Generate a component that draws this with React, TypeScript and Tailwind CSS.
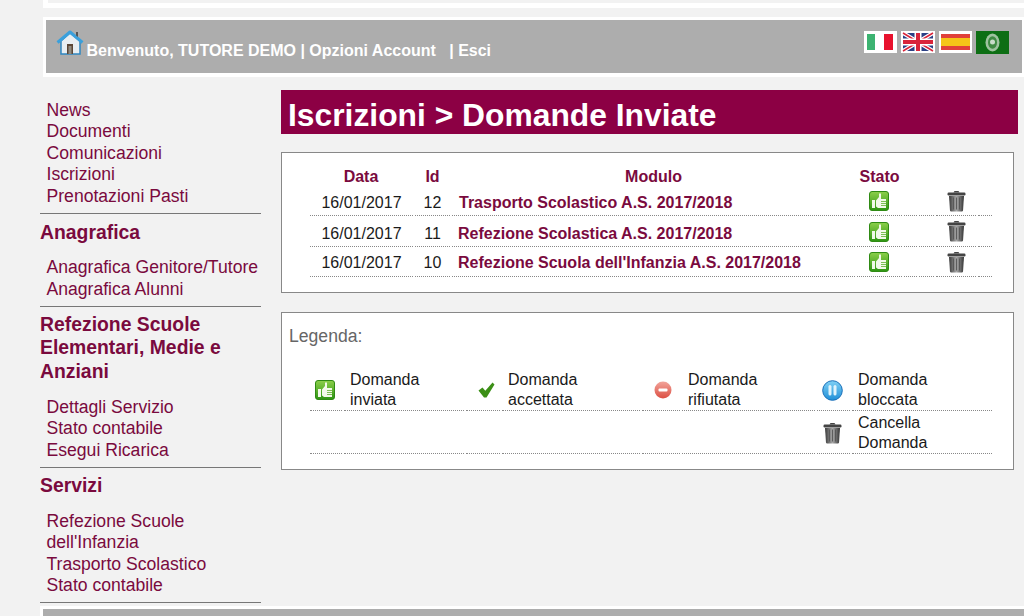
function HomeIcon() {
  return (
    <svg width="28" height="28" viewBox="0 0 28 28" className="shrink-0">
      <path d="M5 12v13h19V12L14 4z" fill="#e8eef2" stroke="#2f86c0" strokeWidth="1.5" />
      <rect x="11" y="15" width="6" height="10" fill="#5b4636" />
      <rect x="12.5" y="17" width="3" height="8" fill="#8f8a80" />
      <path d="M1.5 13.5 14 3l12.500 10.500" fill="none" stroke="#3aa0dc" strokeWidth="3" strokeLinejoin="round" />
      <path d="M20 3h2v5l-2-1.600z" fill="#555" />
    </svg>
  );
}

function ThumbIcon() {
  return (
    <svg width="20" height="20" viewBox="0 0 20 20">
      <defs>
        <linearGradient id="thumbBg" x1="0" y1="0" x2="0" y2="1">
          <stop offset="0" stopColor="#8ccf4a" />
          <stop offset="1" stopColor="#2d9412" />
        </linearGradient>
      </defs>
      <rect x="0.500" y="0.500" width="19" height="19" rx="2.500" fill="url(#thumbBg)" stroke="#2f8a14" />
      <rect x="3" y="9" width="3" height="8" fill="#f2f9ea" />
      <path d="M7 9.500 10 6V2.500h2V8h5v9H9l-2-1.500z" fill="#f2f9ea" />
      <path d="M12 10.500h5M12 12.500h5M12 14.500h5" stroke="#5fb02e" strokeWidth="0.800" />
    </svg>
  );
}

function TrashIcon() {
  return (
    <svg width="19" height="22" viewBox="0 0 19 22">
      <defs>
        <linearGradient id="trashBody" x1="0" y1="0" x2="1" y2="0">
          <stop offset="0" stopColor="#3a3a3a" />
          <stop offset="0.500" stopColor="#a8a8a8" />
          <stop offset="1" stopColor="#333" />
        </linearGradient>
      </defs>
      <path d="M6.500 2.500 7.500 1h4l1 1.500z" fill="#444" />
      <rect x="0.500" y="2.500" width="18" height="3" rx="1.200" fill="#444" />
      <path d="M2 6h15l-1 14.500q-.1 1-1.200 1H4.200q-1.100 0-1.200-1z" fill="url(#trashBody)" />
      <path d="M6.500 7.500v12M9.500 7.500v12M12.500 7.500v12" stroke="#555" strokeWidth="0.900" />
    </svg>
  );
}

function CheckIcon() {
  return (
    <svg width="17" height="16" viewBox="0 0 17 16">
      <path d="M0.500 8.500 4.500 5.500l2.800 3.200L14.500 0.500 16.500 2.500 8.500 15.500h-2.500z" fill="#3b8f16" />
    </svg>
  );
}

function RejectIcon() {
  return (
    <svg width="18" height="18" viewBox="0 0 18 18">
      <defs>
        <linearGradient id="rejectBg" x1="0" y1="0" x2="0" y2="1">
          <stop offset="0" stopColor="#f2a49a" />
          <stop offset="1" stopColor="#dc4f43" />
        </linearGradient>
      </defs>
      <circle cx="9" cy="9" r="8.500" fill="url(#rejectBg)" />
      <rect x="4.500" y="7.500" width="9" height="3" rx="1" fill="#fff" />
    </svg>
  );
}

function BlockedIcon() {
  return (
    <svg width="21" height="21" viewBox="0 0 21 21">
      <defs>
        <linearGradient id="blockBg" x1="0" y1="0" x2="0" y2="1">
          <stop offset="0" stopColor="#7fd0f5" />
          <stop offset="1" stopColor="#1f8fd8" />
        </linearGradient>
      </defs>
      <circle cx="10.500" cy="10.500" r="9.800" fill="url(#blockBg)" stroke="#1b6fb8" />
      <rect x="6.500" y="5" width="3" height="10.500" rx="1.500" fill="#dff3fc" />
      <rect x="11.500" y="5" width="3" height="10.500" rx="1.500" fill="#dff3fc" />
    </svg>
  );
}

function Flags() {
  return (
    <div className="flex items-start gap-[4px] mt-[11px] mr-[13px]">
      <svg width="33" height="22" viewBox="0 0 33 22">
        <rect width="33" height="22" fill="#fff" />
        <rect x="3" y="3" width="8" height="16" fill="#3cb371" />
        <rect x="20" y="3" width="9" height="16" fill="#e8112d" />
      </svg>
      <svg width="34" height="22" viewBox="0 0 34 22">
        <rect width="34" height="22" fill="#fff" />
        <rect x="2" y="2" width="30" height="18" fill="#2a3f85" />
        <path d="M2 2 32 20M32 2 2 20" stroke="#fff" strokeWidth="4" />
        <path d="M2 2 32 20M32 2 2 20" stroke="#d9243a" strokeWidth="1.500" />
        <path d="M17 2v18M2 11h30" stroke="#fff" strokeWidth="7" />
        <path d="M17 2v18M2 11h30" stroke="#d9243a" strokeWidth="4" />
      </svg>
      <svg width="33" height="22" viewBox="0 0 33 22">
        <rect width="33" height="22" fill="#fff" />
        <rect x="2" y="3" width="29" height="16" fill="#e0413a" />
        <rect x="2" y="7" width="29" height="8" fill="#f5c518" />
      </svg>
      <svg width="33" height="23" viewBox="0 0 33 23">
        <rect width="33" height="23" fill="#0d6e14" />
        <ellipse cx="16.500" cy="11.500" rx="7" ry="9" fill="#9fc39f" />
        <ellipse cx="16.500" cy="11.500" rx="4.500" ry="6.200" fill="#3f8a42" />
        <circle cx="16.500" cy="11" r="2.500" fill="#c9dcc9" />
      </svg>
    </div>
  );
}

function NavLinks({ items }: { items: string[] }) {
  return (
    <ul className="pl-[6.500px] text-[17.600px] leading-[21.500px] text-[#7a0a3e]">
      {items.map((item) => (
        <li key={item}>{item}</li>
      ))}
    </ul>
  );
}

function Sidebar() {
  return (
    <aside className="w-[221px] ml-[40px] shrink-0 pt-[22.500px]">
      <NavLinks items={['News', 'Documenti', 'Comunicazioni', 'Iscrizioni', 'Prenotazioni Pasti']} />
      <div className="border-b border-[#777] mt-[5.500px]" />
      <h3 className="text-[19.360px] font-bold leading-[24px] text-[#7a0a3e] mt-[6px] mb-[13.500px]">Anagrafica</h3>
      <NavLinks items={['Anagrafica Genitore/Tutore', 'Anagrafica Alunni']} />
      <div className="border-b border-[#777] mt-[5.500px]" />
      <h3 className="text-[19.360px] font-bold leading-[23.500px] text-[#7a0a3e] mt-[6px] mb-[13.500px]">
        Refezione Scuole Elementari, Medie e Anziani
      </h3>
      <NavLinks items={['Dettagli Servizio', 'Stato contabile', 'Esegui Ricarica']} />
      <div className="border-b border-[#777] mt-[5.500px]" />
      <h3 className="text-[19.360px] font-bold leading-[24px] text-[#7a0a3e] mt-[5.500px] mb-[13.500px]">Servizi</h3>
      <ul className="pl-[6.500px] w-[170px] text-[17.600px] leading-[21.500px] text-[#7a0a3e]">
        <li>Refezione Scuole dell'Infanzia</li>
        <li>Trasporto Scolastico</li>
        <li>Stato contabile</li>
      </ul>
      <div className="border-b border-[#777] mt-[5px]" />
    </aside>
  );
}

const rows = [
  { data: '16/01/2017', id: '12', modulo: 'Trasporto Scolastico A.S. 2017/2018', h: 'h-[28px]', pl: 'pl-[7px]', pt: 'pt-[2px]' },
  { data: '16/01/2017', id: '11', modulo: 'Refezione Scolastica A.S. 2017/2018', h: 'h-[29px]', pl: 'pl-[6px]', pt: 'pt-[4px]' },
  { data: '16/01/2017', id: '10', modulo: "Refezione Scuola dell'Infanzia A.S. 2017/2018", h: 'h-[28px]', pl: 'pl-[6px]', pt: 'pt-0' },
];

const dotted = 'border-b border-dotted border-[#888]';

function DomandeTable() {
  return (
    <table className="table-fixed border-separate border-spacing-[2px] w-[686px] ml-[26px] mt-[13px] text-[16px] leading-[20px] text-[#1a1a1a]">
      <colgroup>
        <col className="w-[103px]" />
        <col className="w-[35px]" />
        <col className="w-[403px]" />
        <col className="w-[45px]" />
        <col className="w-[13px]" />
        <col className="w-[15px]" />
        <col className="w-[40px]" />
        <col className="w-[14px]" />
      </colgroup>
      <thead>
        <tr className="h-[18px] leading-[18px] text-[#7a0a3e]">
          <th className="font-bold pr-[1px]">Data</th>
          <th className="font-bold">Id</th>
          <th className="font-bold">Modulo</th>
          <th className="font-bold">Stato</th>
          <th />
          <th />
          <th />
          <th />
        </tr>
      </thead>
      <tbody>
        {rows.map((r) => (
          <tr key={r.id} className={r.h}>
            <td className={`${dotted} ${r.pt} text-center`}>{r.data}</td>
            <td className={`${dotted} ${r.pt} text-center`}>{r.id}</td>
            <td className={`${dotted} ${r.pt} ${r.pl} font-bold text-[#7a0a3e]`}>{r.modulo}</td>
            <td className={dotted}>
              <div className="flex justify-center pr-[2px] -mt-[1px]">
                <ThumbIcon />
              </div>
            </td>
            <td className={dotted} />
            <td className={dotted} />
            <td className={dotted}>
              <div className="flex justify-center -mt-[2px]">
                <TrashIcon />
              </div>
            </td>
            <td className={dotted} />
          </tr>
        ))}
      </tbody>
    </table>
  );
}

function IconCell({ nudge, children }: { nudge?: string; children?: React.ReactNode }) {
  return (
    <td className={dotted}>
      <div className={`flex justify-center ${nudge ?? ''}`}>{children}</div>
    </td>
  );
}

function TextCell({ children }: { children?: React.ReactNode }) {
  return <td className={`${dotted} pl-[6px] leading-[20px]`}>{children}</td>;
}

function LegendTable() {
  return (
    <table className="table-fixed border-separate border-spacing-[2px] w-[686px] ml-[26px] mt-[22px] text-[16px] text-[#1a1a1a]">
      <colgroup>
        <col className="w-[32px]" />
        <col className="w-[120px]" />
        <col className="w-[34px]" />
        <col className="w-[138px]" />
        <col className="w-[38px]" />
        <col className="w-[133px]" />
        <col className="w-[33px]" />
        <col className="w-[140px]" />
      </colgroup>
      <tbody>
        <tr>
          <IconCell nudge="pr-[2px]"><ThumbIcon /></IconCell>
          <TextCell>Domanda inviata</TextCell>
          <IconCell nudge="pl-[6px]"><CheckIcon /></IconCell>
          <TextCell>Domanda<br />accettata</TextCell>
          <IconCell nudge="pl-[4px]"><RejectIcon /></IconCell>
          <TextCell>Domanda<br />rifiutata</TextCell>
          <IconCell nudge="pr-[2px]"><BlockedIcon /></IconCell>
          <TextCell>Domanda<br />bloccata</TextCell>
        </tr>
        <tr>
          <IconCell />
          <TextCell />
          <IconCell />
          <TextCell />
          <IconCell />
          <TextCell />
          <IconCell nudge="pr-[2px]"><TrashIcon /></IconCell>
          <TextCell>Cancella<br />Domanda</TextCell>
        </tr>
      </tbody>
    </table>
  );
}

export default function App() {
  return (
    <div className="h-[616px] overflow-hidden bg-[#f2f2f2] font-['Liberation_Sans',Arial,sans-serif]">
      {/* top strip */}
      <div className="ml-[43px] h-[8px] bg-white pl-[5px] pb-[5px]">
        <div className="h-[3px] bg-[#f2f2f2]" />
      </div>

      {/* welcome bar */}
      <div className="ml-[43px] mt-[9px] bg-white pt-[3px] pb-[4px] pl-[3px] pr-[2px]">
        <div className="h-[53px] bg-[#adadad] flex justify-between">
          <div className="flex items-start pl-[10px] pt-[9px]">
            <HomeIcon />
            <span className="ml-[2.500px] mt-[13px] text-[16px] leading-[18px] font-bold text-white whitespace-pre">
              Benvenuto, TUTORE DEMO | Opzioni Account   | Esci
            </span>
          </div>
          <Flags />
        </div>
      </div>

      <div className="flex h-[530px]">
        <Sidebar />
        <main className="ml-[20px] w-[737px] pt-[13px]">
          <h1 className="h-[44px] bg-[#8c0044] pl-[7px] text-[31.800px] leading-[50px] font-bold text-white">
            Iscrizioni &gt; Domande Inviate
          </h1>

          <section className="w-[733px] h-[141px] mt-[18px] bg-white border border-[#888]">
            <DomandeTable />
          </section>

          <section className="w-[733px] h-[158px] mt-[19px] bg-white border border-[#888]">
            <p className="pl-[7px] pt-[13px] text-[17.600px] leading-[20px] text-[#666]">Legenda:</p>
            <LegendTable />
          </section>
        </main>
      </div>

      {/* footer bar */}
      <div className="ml-[40px] bg-white pt-[3px] pl-[3px] mt-[-1px]">
        <div className="h-[10px] bg-[#adadad]" />
      </div>
    </div>
  );
}
